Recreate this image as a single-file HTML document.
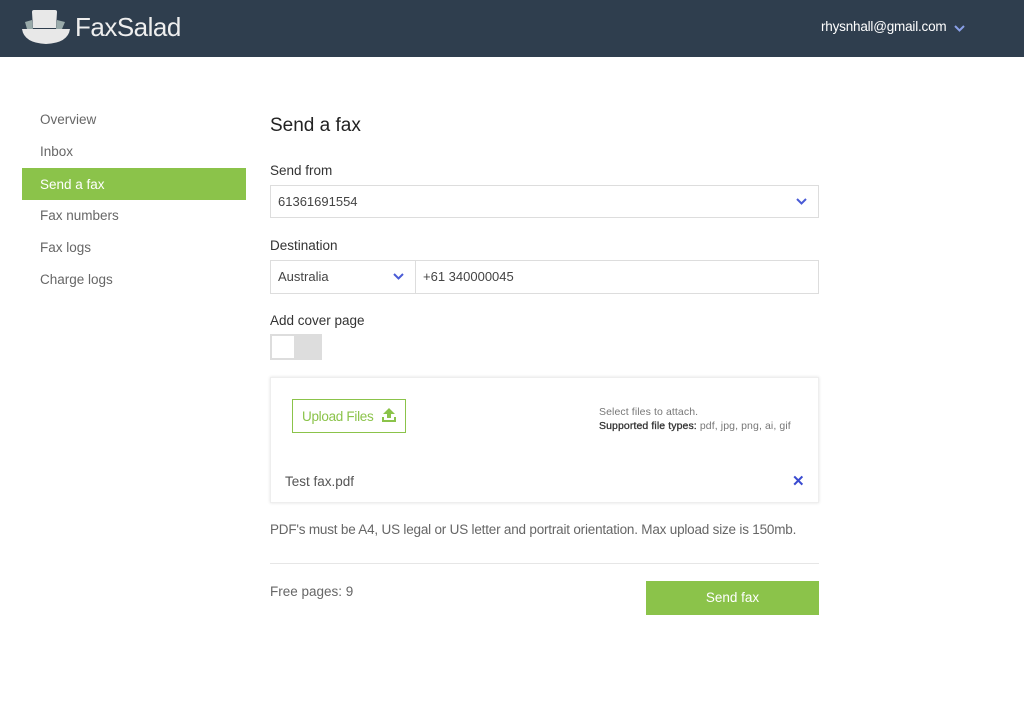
<!DOCTYPE html>
<html><head><style>
*{box-sizing:border-box;margin:0;padding:0}
body{width:1024px;height:705px;background:#fff;font-family:"Liberation Sans",sans-serif;color:#333;position:relative;overflow:hidden}
.hdr{position:absolute;left:0;top:0;width:1024px;height:57px;background:#2f3e4e}
.abs{position:absolute}
.nav{position:absolute;left:22px;width:224px;height:32px;line-height:33px;padding-left:18px;font-size:13.5px;color:#666}
.lbl{position:absolute;left:270px;font-size:13.5px;color:#333}
.box{position:absolute;border:1px solid #ddd;background:#fff;font-size:13px;color:#444;padding-left:7px}
.chev{position:absolute}
</style></head><body>
<div class="hdr">
<svg class="abs" style="left:20px;top:8px" width="52" height="38" viewBox="0 0 52 38">
<path d="M12 4 Q12 2 14 2 L35 2 Q37 2 37 4 L36 20 L13 20 Z" fill="#e8e8e8"/>
<path d="M5 14 L12 12 L13 21 L7 21 Z" fill="#9aa"/>
<path d="M45 14 L37 12 L36 21 L42 21 Z" fill="#9aa"/>
<path d="M2 21 L50 21 Q48 35 26 36 Q4 35 2 21 Z" fill="#e8e8e8"/>
</svg>
<div class="abs" style="left:75px;top:12px;font-size:26px;color:#eee;letter-spacing:-0.5px">FaxSalad</div>
<div class="abs" style="left:821px;top:19px;font-size:13.5px;color:#fff;letter-spacing:-0.2px">rhysnhall@gmail.com</div>
<svg class="abs" style="left:954px;top:25px" width="11" height="7"><path d="M1 1 L5.5 5.5 L10 1" stroke="#8aa0e8" stroke-width="2" fill="none"/></svg>
</div>
<div class="nav" style="top:103px">Overview</div>
<div class="nav" style="top:135px">Inbox</div>
<div class="nav" style="top:168px;background:#8bc34a;color:#fff">Send a fax</div>
<div class="nav" style="top:199px">Fax numbers</div>
<div class="nav" style="top:231px">Fax logs</div>
<div class="nav" style="top:263px">Charge logs</div>
<div class="abs" style="left:270px;top:115px;font-size:19px;color:#222">Send a fax</div>
<div class="lbl" style="top:163px">Send from</div>
<div class="box" style="left:270px;top:185px;width:549px;height:33px;line-height:31px">61361691554</div>
<svg class="chev" style="left:796px;top:198px" width="11" height="7"><path d="M1 1 L5.5 5.5 L10 1" stroke="#4a5bd6" stroke-width="2" fill="none"/></svg>
<div class="lbl" style="top:238px">Destination</div>
<div class="box" style="left:270px;top:260px;width:146px;height:34px;line-height:32px">Australia</div>
<svg class="chev" style="left:393px;top:273px" width="11" height="7"><path d="M1 1 L5.5 5.5 L10 1" stroke="#4a5bd6" stroke-width="2" fill="none"/></svg>
<div class="box" style="left:415px;top:260px;width:404px;height:34px;line-height:32px">+61 340000045</div>
<div class="lbl" style="top:313px">Add cover page</div>
<div class="abs" style="left:270px;top:334px;width:52px;height:26px;background:#ddd"></div>
<div class="abs" style="left:272px;top:336px;width:22px;height:22px;background:#fff"></div>
<div class="abs" style="left:270px;top:377px;width:549px;height:126px;border:1px solid #eee;box-shadow:0 0 3px rgba(0,0,0,.12)"></div>
<div class="abs" style="left:292px;top:399px;width:114px;height:34px;border:1px solid #8bc34a;color:#8bc34a;font-size:13.5px;line-height:33px;padding-left:9px;letter-spacing:-0.3px">Upload Files</div>
<svg class="abs" style="left:382px;top:408px" width="14" height="15"><path d="M7 0 L13 6 L9 6 L9 10 L5 10 L5 6 L1 6 Z" fill="#8bc34a"/><path d="M0 9 L2 9 L2 12 L12 12 L12 9 L14 9 L14 14 L0 14 Z" fill="#8bc34a"/></svg>
<div class="abs" style="left:599px;top:405px;font-size:10.5px;color:#777;line-height:14px;letter-spacing:0.1px">Select files to attach.<br><span style="color:#333;-webkit-text-stroke:0.3px #333">Supported file types:</span> pdf, jpg, png, ai, gif</div>
<div class="abs" style="left:285px;top:474px;font-size:13.5px;color:#555">Test fax.pdf</div>
<div class="abs" style="left:792px;top:472px;font-size:15px;color:#3a4bd0;font-weight:bold">✕</div>
<div class="abs" style="left:270px;top:522px;font-size:13.5px;color:#666;letter-spacing:-0.2px">PDF's must be A4, US legal or US letter and portrait orientation. Max upload size is 150mb.</div>
<div class="abs" style="left:270px;top:563px;width:549px;height:1px;background:#e6e6e6"></div>
<div class="abs" style="left:270px;top:584px;font-size:13.5px;color:#666">Free pages: 9</div>
<div class="abs" style="left:646px;top:581px;width:173px;height:34px;background:#8bc34a;color:#fff;font-size:13.5px;text-align:center;line-height:34px">Send fax</div>
</body></html>
